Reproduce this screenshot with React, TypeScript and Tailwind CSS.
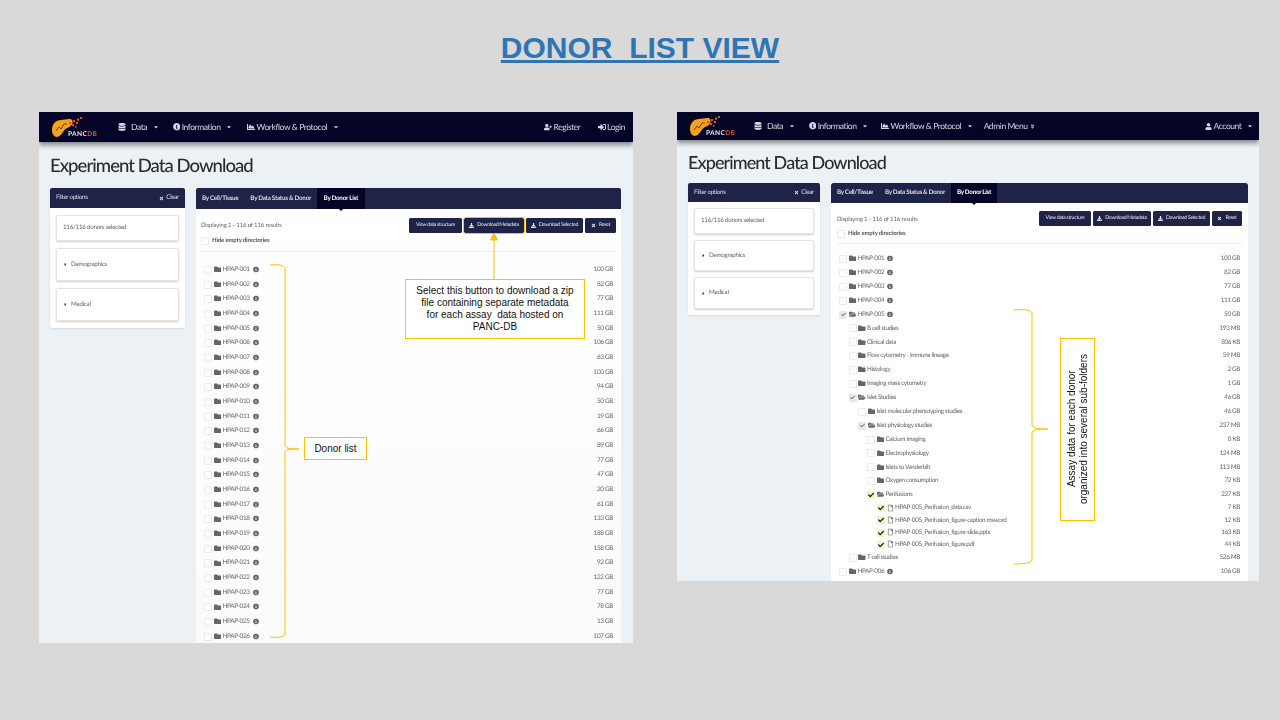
import type { ReactNode } from "react";
import {
  FaAngleDoubleDown,
  FaCaretDown,
  FaCaretRight,
  FaChartArea,
  FaCheck,
  FaDatabase,
  FaDownload,
  FaFolder,
  FaFolderOpen,
  FaInfoCircle,
  FaRegFile,
  FaSignInAlt,
  FaTimes,
  FaUser,
  FaUserPlus,
} from "react-icons/fa";

const donorSizes = [
  "100 GB", "82 GB", "77 GB", "111 GB", "50 GB", "106 GB", "63 GB", "100 GB", "94 GB",
  "50 GB", "19 GB", "66 GB", "89 GB", "77 GB", "47 GB", "20 GB", "61 GB", "133 GB",
  "188 GB", "158 GB", "92 GB", "122 GB", "77 GB", "78 GB", "13 GB", "107 GB",
];

type TreeRow = {
  name: string;
  size: string;
  level: number;
  kind?: "open" | "file";
  checked?: "grey" | "yellow";
  info?: boolean;
};

const treeRows: TreeRow[] = [
  { name: "HPAP-001", size: "100 GB", level: 0, info: true },
  { name: "HPAP-002", size: "82 GB", level: 0, info: true },
  { name: "HPAP-003", size: "77 GB", level: 0, info: true },
  { name: "HPAP-004", size: "111 GB", level: 0, info: true },
  { name: "HPAP-005", size: "50 GB", level: 0, info: true, kind: "open", checked: "grey" },
  { name: "B cell studies", size: "193 MB", level: 1 },
  { name: "Clinical data", size: "806 KB", level: 1 },
  { name: "Flow cytometry - Immune lineage", size: "59 MB", level: 1 },
  { name: "Histology", size: "2 GB", level: 1 },
  { name: "Imaging mass cytometry", size: "1 GB", level: 1 },
  { name: "Islet Studies", size: "46 GB", level: 1, kind: "open", checked: "grey" },
  { name: "Islet molecular phenotyping studies", size: "46 GB", level: 2 },
  { name: "Islet physiology studies", size: "237 MB", level: 2, kind: "open", checked: "grey" },
  { name: "Calcium imaging", size: "0 KB", level: 3 },
  { name: "Electrophysiology", size: "124 MB", level: 3 },
  { name: "Islets to Vanderbilt", size: "113 MB", level: 3 },
  { name: "Oxygen consumption", size: "72 KB", level: 3 },
  { name: "Perifusions", size: "227 KB", level: 3, kind: "open", checked: "yellow" },
  { name: "HPAP-005_Perifusion_data.csv", size: "7 KB", level: 4, kind: "file", checked: "yellow" },
  { name: "HPAP-005_Perifusion_figure-caption.msword", size: "12 KB", level: 4, kind: "file", checked: "yellow" },
  { name: "HPAP-005_Perifusion_figure-slide.pptx", size: "163 KB", level: 4, kind: "file", checked: "yellow" },
  { name: "HPAP-005_Perifusion_figure.pdf", size: "44 KB", level: 4, kind: "file", checked: "yellow" },
  { name: "T cell studies", size: "526 MB", level: 1 },
  { name: "HPAP-006", size: "106 GB", level: 0, info: true },
  { name: "", size: "", level: 0 },
];

const indentClass = ["pl-0", "pl-[9.5px]", "pl-[19px]", "pl-[28px]", "pl-[37.5px]"];

function Logo() {
  return (
    <svg width="48" height="24" viewBox="0 0 48 24" className="shrink-0">
      <path d="M1 15 C1 9 5 5 10 5 C14 5 19 3 21 5 C23 8 20 12 16 13 C12 15 11 21 6 22 C3 22 1 19 1 15 Z" fill="#f9a11b" />
      <path d="M5 16 L8 12 L10 14 L13 9 L16 9" stroke="#1a1a1a" strokeWidth="0.7" fill="none" />
      <g fill="#e2521d">
        <rect x="18" y="7" width="2.2" height="2.2" />
        <rect x="21" y="9" width="2.2" height="2.2" />
        <rect x="22" y="5" width="2.2" height="2.2" />
        <rect x="25" y="7" width="2" height="2" />
        <rect x="26" y="3.5" width="2.2" height="2.2" />
        <rect x="29" y="2" width="2" height="2" />
        <rect x="24" y="11" width="1.6" height="1.6" />
      </g>
      <text x="17" y="21" fontSize="6.6" fontWeight="700" fontFamily="Lato, sans-serif" fill="#e8e8e8" letterSpacing="0.35">
        PANC<tspan fill="#e2521d">DB</tspan>
      </text>
    </svg>
  );
}

function NavItem({ icon, label, caret = true, className = "" }: { icon: ReactNode; label: string; caret?: boolean; className?: string }) {
  return (
    <div className={`flex items-center gap-[1.5px] text-[8.5px] tracking-[-0.42px] text-[#d5d6df] ${className}`}>
      {icon}
      <span>{label}</span>
      {caret && <FaCaretDown className="ml-[4px] text-[6px]" />}
    </div>
  );
}

function ActionButton({ label, icon, className }: { label: string; icon?: ReactNode; className: string }) {
  return (
    <div className={`flex h-[15px] items-center justify-center gap-[3px] rounded-[1.5px] bg-[#1f2347] text-[5.2px] tracking-[-0.3px] text-[#e6e7ee] ${className}`}>
      {icon}
      <span>{label}</span>
    </div>
  );
}

function Box({ checked }: { checked?: "grey" | "yellow" }) {
  if (checked === "yellow") {
    return (
      <span className="flex h-[8px] w-[8px] shrink-0 items-center justify-center rounded-[1px] bg-[#f5f3c8] text-[6px] text-[#1a1a1a]">
        <FaCheck />
      </span>
    );
  }
  if (checked === "grey") {
    return (
      <span className="flex h-[8px] w-[8px] shrink-0 items-center justify-center rounded-[1px] bg-[#e9e9e9] text-[5px] text-[#808080]">
        <FaCheck />
      </span>
    );
  }
  return <span className="h-[8px] w-[8px] shrink-0 rounded-[1px] border border-[#ebebeb] bg-white" />;
}

function RowLabel({ name, kind, info }: { name: string; kind?: "open" | "file"; info?: boolean }) {
  return (
    <>
      {kind === "file" ? (
        <FaRegFile className="ml-[2px] shrink-0 -translate-y-[0.5px] text-[7px] text-[#666666]" />
      ) : kind === "open" ? (
        <FaFolderOpen className="ml-[1.5px] shrink-0 -translate-y-[0.5px] text-[7.5px] text-[#666666]" />
      ) : (
        <FaFolder className="ml-[1.5px] shrink-0 -translate-y-[0.5px] text-[7.5px] text-[#666666]" />
      )}
      <span className="ml-[1.5px] whitespace-nowrap">{name}</span>
      {info && <FaInfoCircle className="ml-[3px] shrink-0 -translate-y-[0.5px] text-[6px] text-[#666666]" />}
    </>
  );
}

function FilterCard({ children, className }: { children: ReactNode; className: string }) {
  return (
    <div className={`flex items-center rounded-[2px] border border-[#e4e4e4] bg-white pl-[6px] text-[6.2px] tracking-[-0.25px] text-[#666666] shadow-[0_1px_2px_rgba(0,0,0,0.2)] ${className}`}>
      {children}
    </div>
  );
}

function PublicWindow() {
  return (
    <div className="absolute left-[39px] top-[112px] flex h-[531px] w-[594px] flex-col overflow-hidden bg-[#ecf1f6] font-['Lato',sans-serif] blur-[0.3px] [text-rendering:geometricPrecision]">
      <div className="flex h-[30px] shrink-0 items-center bg-[#040526] pl-[12px] pr-[8px] shadow-[0_3px_5px_rgba(0,0,0,0.45)]">
        <Logo />
        <NavItem className="ml-[19px]" icon={<FaDatabase className="mr-[3.5px] text-[8px]" />} label="Data" />
        <NavItem className="ml-[14px]" icon={<FaInfoCircle className="text-[7.5px]" />} label="Information" />
        <NavItem className="ml-[15px]" icon={<FaChartArea className="text-[8px]" />} label="Workflow & Protocol" />
        <NavItem className="ml-auto" icon={<FaUserPlus className="text-[8px]" />} label="Register" caret={false} />
        <NavItem className="ml-[17px]" icon={<FaSignInAlt className="text-[8px]" />} label="Login" caret={false} />
      </div>
      <h1 className="ml-[11px] mt-[11px] h-[25px] text-[18.5px] font-medium leading-[25px] tracking-[-0.95px] text-[#2b2b2b]">Experiment Data Download</h1>
      <div className="ml-[11px] mt-[10px] flex min-h-0 flex-1 gap-[11px]">
        <div className="h-[140px] w-[135px] shrink-0 rounded-[2px] bg-white shadow-[0_1px_2px_rgba(0,0,0,0.1)]">
          <div className="flex h-[20px] items-center justify-between rounded-t-[2px] bg-[#1f2347] px-[6px] text-[6.3px] tracking-[-0.35px] text-[#dcdde6]">
            <span>Filter options</span>
            <span className="flex items-center gap-[2px]"><FaTimes className="text-[5px]" />Clear</span>
          </div>
          <div className="flex flex-col gap-[7px] px-[6px] pt-[7px]">
            <FilterCard className="h-[26px]">116/116 donors selected</FilterCard>
            <FilterCard className="h-[33px]"><FaCaretRight className="mr-[3px] text-[5px] text-[#333333]" />Demographics</FilterCard>
            <FilterCard className="h-[33px]"><FaCaretRight className="mr-[3px] text-[5px] text-[#333333]" />Medical</FilterCard>
          </div>
        </div>
        <div className="flex w-[425px] shrink-0 flex-col rounded-t-[2px] bg-gradient-to-b from-white to-[#fbfbfb]">
          <div className="flex h-[21px] shrink-0 items-center rounded-t-[2px] bg-[#1f2347] text-[6.3px] font-bold tracking-[-0.27px] text-[#dcdde6]">
            <span className="ml-[6px]">By Cell/Tissue</span>
            <span className="ml-[12px]">By Data Status &amp; Donor</span>
            <span className="relative ml-[6px] flex h-full items-center bg-[#040526] px-[6.5px] text-white">
              By Donor List
              <span className="absolute -bottom-[2px] left-1/2 -ml-[2px] border-x-[2px] border-t-[2px] border-x-transparent border-t-[#040526]" />
            </span>
          </div>
          <div className="mx-[5px] flex h-[43px] shrink-0 justify-between border-b border-[#efefef] text-[6px] tracking-[-0.15px] text-[#666666]">
            <div className="pt-[13px]">
              <div className="leading-[8px]">Displaying 1 - 116 of 116 results</div>
              <div className="mt-[6px] flex items-center gap-[3px] font-bold text-[#555555]">
                <Box />
                <span>Hide empty directories</span>
              </div>
            </div>
            <div className="flex gap-[2px] pt-[9px]">
              <ActionButton className="w-[53px]" label="View data structure" />
              <ActionButton className="w-[60px] outline outline-1 outline-[#ffc000]" icon={<FaDownload className="text-[5px]" />} label="Download Metadata" />
              <ActionButton className="w-[57px]" icon={<FaDownload className="text-[5px]" />} label="Download Selected" />
              <ActionButton className="w-[31px]" icon={<FaTimes className="text-[5px]" />} label="Reset" />
            </div>
          </div>
          <div className="flex flex-col pl-[8px] pr-[8px] pt-[10.5px] text-[6.4px] tracking-[-0.35px] text-[#666666]">
            {donorSizes.map((size, i) => (
              <div key={i} className="flex h-[14.68px] items-center">
                <Box />
                <RowLabel name={`HPAP-${String(i + 1).padStart(3, "0")}`} info />
                <span className="ml-auto">{size}</span>
              </div>
            ))}
          </div>
        </div>
      </div>
    </div>
  );
}

function AdminWindow() {
  return (
    <div className="absolute left-[677px] top-[112px] flex h-[469px] w-[582px] flex-col overflow-hidden bg-[#ecf1f6] font-['Lato',sans-serif] blur-[0.3px] [text-rendering:geometricPrecision]">
      <div className="flex h-[28px] shrink-0 items-center bg-[#040526] pl-[12px] pr-[6px] shadow-[0_3px_5px_rgba(0,0,0,0.45)]">
        <Logo />
        <NavItem className="ml-[17px]" icon={<FaDatabase className="mr-[3.5px] text-[8px]" />} label="Data" />
        <NavItem className="ml-[14px]" icon={<FaInfoCircle className="text-[7.5px]" />} label="Information" />
        <NavItem className="ml-[13px]" icon={<FaChartArea className="text-[8px]" />} label="Workflow & Protocol" />
        <div className="ml-[11px] flex items-center gap-[2px] text-[8.5px] tracking-[-0.42px] text-[#d5d6df]">Admin Menu<FaAngleDoubleDown className="text-[5px]" /></div>
        <NavItem className="ml-auto" icon={<FaUser className="text-[7px]" />} label="Account" />
      </div>
      <h1 className="ml-[11px] mt-[10px] h-[25px] text-[18px] font-medium leading-[25px] tracking-[-0.9px] text-[#2b2b2b]">Experiment Data Download</h1>
      <div className="ml-[11px] mt-[8px] flex min-h-0 flex-1 gap-[11px]">
        <div className="h-[132px] w-[132px] shrink-0 rounded-[2px] bg-white shadow-[0_1px_2px_rgba(0,0,0,0.1)]">
          <div className="flex h-[19px] items-center justify-between rounded-t-[2px] bg-[#1f2347] px-[6px] text-[6.3px] tracking-[-0.35px] text-[#dcdde6]">
            <span>Filter options</span>
            <span className="flex items-center gap-[2px]"><FaTimes className="text-[5px]" />Clear</span>
          </div>
          <div className="flex flex-col gap-[6px] px-[6px] pt-[6px]">
            <FilterCard className="h-[26px]">116/116 donors selected</FilterCard>
            <FilterCard className="h-[31px]"><FaCaretRight className="mr-[3px] text-[5px] text-[#333333]" />Demographics</FilterCard>
            <FilterCard className="h-[32px]"><FaCaretRight className="mr-[3px] text-[5px] text-[#333333]" />Medical</FilterCard>
          </div>
        </div>
        <div className="flex w-[417px] shrink-0 flex-col overflow-hidden rounded-t-[2px] bg-white">
          <div className="flex h-[20px] shrink-0 items-center rounded-t-[2px] bg-[#1f2347] text-[6.3px] font-bold tracking-[-0.3px] text-[#dcdde6]">
            <span className="ml-[6px]">By Cell/Tissue</span>
            <span className="ml-[12px]">By Data Status &amp; Donor</span>
            <span className="relative ml-[6px] flex h-full items-center bg-[#040526] px-[6px] text-white">
              By Donor List
              <span className="absolute -bottom-[2px] left-1/2 -ml-[2px] border-x-[2px] border-t-[2px] border-x-transparent border-t-[#040526]" />
            </span>
          </div>
          <div className="mx-[6px] flex h-[41px] shrink-0 justify-between border-b border-[#efefef] text-[6px] tracking-[-0.15px] text-[#666666]">
            <div className="pt-[13px]">
              <div className="leading-[8px]">Displaying 1 - 116 of 116 results</div>
              <div className="mt-[5px] flex items-center gap-[3px] font-bold text-[#555555]">
                <Box />
                <span>Hide empty directories</span>
              </div>
            </div>
            <div className="flex gap-[2px] pt-[8px]">
              <ActionButton className="w-[52px]" label="View data structure" />
              <ActionButton className="w-[58px]" icon={<FaDownload className="text-[5px]" />} label="Download Metadata" />
              <ActionButton className="w-[57px]" icon={<FaDownload className="text-[5px]" />} label="Download Selected" />
              <ActionButton className="w-[30px]" icon={<FaTimes className="text-[5px]" />} label="Reset" />
            </div>
          </div>
          <div className="flex flex-col pl-[8px] pr-[8px] pt-[8px] text-[6.3px] tracking-[-0.34px] text-[#666666]">
            {treeRows.map((row, i) => (
              <div key={i} className={`flex items-center ${row.kind === "file" ? "h-[12.2px]" : "h-[13.9px]"} ${indentClass[row.level]}`}>
                <Box checked={row.checked} />
                {row.name && <RowLabel name={row.name} kind={row.kind} info={row.info} />}
                <span className="ml-auto">{row.size}</span>
              </div>
            ))}
          </div>
        </div>
      </div>
    </div>
  );
}

function Annotations() {
  return (
    <svg className="absolute left-0 top-0" width="1280" height="720" fill="none" stroke="#ffc000" strokeWidth="1">
      <path d="M270 265 C278 264 285 265 285 269 L285 445 C285 448 288 449 299 449 C288 449 285 450 285 453 L285 633 C285 637 278 638 270 637" />
      <path d="M1014 310 C1024 309 1032 310 1032 313 L1032 425 C1032 428 1036 429 1048 429 C1036 429 1032 430 1032 433 L1032 560 C1032 563 1024 564 1014 564" />
      <path d="M494 279 L494 238" />
      <path d="M494 233 L497.5 240 L490.5 240 Z" fill="#ffc000" />
    </svg>
  );
}

export default function App() {
  return (
    <div className="relative h-[720px] w-[1280px] overflow-hidden bg-[#d9d9d9] font-['Liberation_Sans',sans-serif]">
      <h1 className="pt-[29px] text-center text-[30px] font-bold leading-[38px] text-[#2e75b6] underline">DONOR&nbsp; LIST VIEW</h1>
      <PublicWindow />
      <AdminWindow />
      <Annotations />
      <div className="absolute left-[405px] top-[279px] flex h-[60px] w-[180px] items-center justify-center border border-[#ffc000] bg-white text-center text-[10px] leading-[12.2px] text-[#111111]">
        <div>
          Select this button to download a zip
          <br />
          file containing separate metadata
          <br />
          for each assay&nbsp; data hosted on
          <br />
          PANC-DB
        </div>
      </div>
      <div className="absolute left-[304px] top-[437px] flex h-[23px] w-[63px] items-center justify-center border border-[#ffc000] bg-white text-[10px] text-[#111111]">
        Donor list
      </div>
      <div className="absolute left-[1060px] top-[338px] flex h-[183px] w-[35px] items-center justify-center border border-[#ffc000] bg-white text-center text-[10px] leading-[12px] text-[#111111]">
        <div className="rotate-180 [writing-mode:vertical-rl]">
          Assay data for each donor
          <br />
          organized into several sub-folders
        </div>
      </div>
    </div>
  );
}
